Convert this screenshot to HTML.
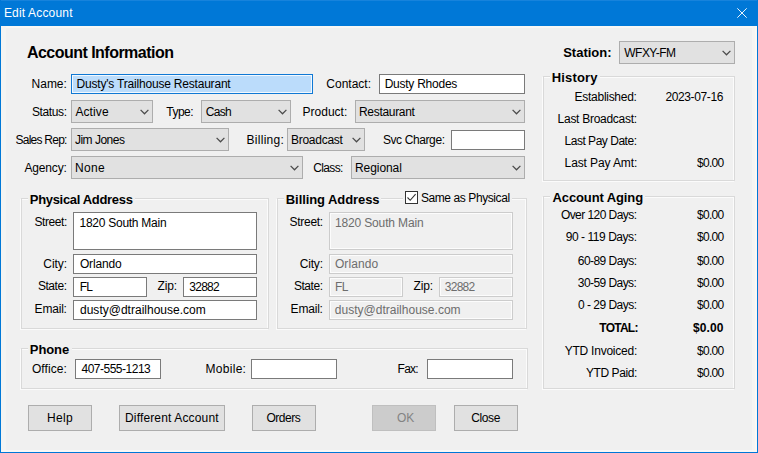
<!DOCTYPE html><html><head><meta charset="utf-8"><title>Edit Account</title><style>
html,body{margin:0;padding:0}
body{width:758px;height:453px;overflow:hidden;background:#f0f0f0;font-family:"Liberation Sans",sans-serif;font-size:12px;color:#000;position:relative}
.tb{position:absolute;left:0;top:0;width:758px;height:26px;background:#0078d7;box-shadow:inset 0 1px 0 #1783dc}
.bl,.br,.bb{position:absolute;background:#0078d7}
.bl{left:0;top:0;width:1px;height:453px}.br{right:0;top:0;width:1px;height:453px}.bb{left:0;bottom:0;width:758px;height:1px}
.t{position:absolute;white-space:nowrap;line-height:1}
.b{font-weight:bold}
.x{position:absolute;box-sizing:border-box}
.inp{background:#fff;border:1px solid #7a7a7a}
.sel{background:#bbdcfb;border-color:#0f78d4;box-shadow:inset 0 0 0 1px #f2f8fe}
.dis{background:#f0f0f0;border:1px solid #cccccc;box-shadow:inset 0 0 0 1px #fcfcfc}
.cmb{background:#e1e1e1;border:1px solid #adadad}
.btn{background:#e1e1e1;border:1px solid #adadad}
.off{background:#cccccc;border-color:#bfbfbf}
.gb{position:absolute;box-sizing:border-box;border:1px solid #d9d9d9;box-shadow:-1px 1px 0 #fbfbfb, inset -1px 1px 0 #fbfbfb}
.gap{position:absolute;background:#f0f0f0;height:3px}
.fr{position:absolute;background:#f7f7f5}
.chk{position:absolute;left:405px;top:191px;width:13px;height:13px;box-sizing:border-box;border:1px solid #333;background:#fff}
svg{position:absolute;overflow:visible}
</style></head><body>
<div class="fr" style="left:1px;top:26px;width:756px;height:2px"></div><div class="fr" style="left:1px;top:26px;width:5px;height:426px;background:#f4f4f2"></div><div class="fr" style="left:752px;top:26px;width:5px;height:426px;background:#f5f5f3"></div><div class="fr" style="left:1px;top:450px;width:756px;height:2px;background:#f8f8f6"></div><div class="fr" style="left:755px;top:26px;width:2px;height:426px;background:#fbf8f4"></div>
<div class="tb"></div><div class="bl"></div><div class="br"></div><div class="bb"></div>
<svg style="left:737px;top:8px" width="10" height="10" viewBox="0 0 10 10"><path d="M0.3 0.3L9.7 9.7M9.7 0.3L0.3 9.7" stroke="#fff" stroke-width="1" stroke-opacity="0.92" fill="none"/></svg>
<div class="gb" style="left:21px;top:198px;width:248px;height:131px"></div>
<div class="gap" style="left:28px;top:198px;width:107px"></div>
<div class="gb" style="left:277px;top:198px;width:250px;height:131px"></div>
<div class="gap" style="left:284px;top:198px;width:97px"></div>
<div class="gap" style="left:403px;top:198px;width:109px"></div>
<div class="gb" style="left:543px;top:76px;width:192px;height:105px"></div>
<div class="gap" style="left:550px;top:76px;width:50px"></div>
<div class="gb" style="left:543px;top:196px;width:192px;height:193px"></div>
<div class="gap" style="left:550px;top:196px;width:95px"></div>
<div class="gb" style="left:21px;top:348px;width:507px;height:41px"></div>
<div class="gap" style="left:28px;top:348px;width:44px"></div>
<div class="x inp sel" style="left:71px;top:74px;width:242px;height:20px"></div>
<div class="x inp" style="left:379px;top:74px;width:146px;height:20px"></div>
<div class="x inp" style="left:451px;top:130px;width:74px;height:20px"></div>
<div class="x cmb" style="left:71px;top:100px;width:82px;height:23px"></div>
<svg style="left:139.5px;top:108.7px" width="9" height="6" viewBox="0 0 9 6"><path d="M0.6 0.9L4.5 4.8L8.4 0.9" stroke="#4a4a4a" stroke-width="1.25" fill="none"/></svg>
<div class="x cmb" style="left:201px;top:100px;width:90px;height:23px"></div>
<svg style="left:277.5px;top:108.7px" width="9" height="6" viewBox="0 0 9 6"><path d="M0.6 0.9L4.5 4.8L8.4 0.9" stroke="#4a4a4a" stroke-width="1.25" fill="none"/></svg>
<div class="x cmb" style="left:355px;top:100px;width:170px;height:23px"></div>
<svg style="left:511.5px;top:108.7px" width="9" height="6" viewBox="0 0 9 6"><path d="M0.6 0.9L4.5 4.8L8.4 0.9" stroke="#4a4a4a" stroke-width="1.25" fill="none"/></svg>
<div class="x cmb" style="left:71px;top:128px;width:158px;height:23px"></div>
<svg style="left:215.5px;top:136.7px" width="9" height="6" viewBox="0 0 9 6"><path d="M0.6 0.9L4.5 4.8L8.4 0.9" stroke="#4a4a4a" stroke-width="1.25" fill="none"/></svg>
<div class="x cmb" style="left:287px;top:128px;width:78px;height:23px"></div>
<svg style="left:351.5px;top:136.7px" width="9" height="6" viewBox="0 0 9 6"><path d="M0.6 0.9L4.5 4.8L8.4 0.9" stroke="#4a4a4a" stroke-width="1.25" fill="none"/></svg>
<div class="x cmb" style="left:71px;top:156px;width:232px;height:23px"></div>
<svg style="left:289.5px;top:164.7px" width="9" height="6" viewBox="0 0 9 6"><path d="M0.6 0.9L4.5 4.8L8.4 0.9" stroke="#4a4a4a" stroke-width="1.25" fill="none"/></svg>
<div class="x cmb" style="left:351px;top:156px;width:174px;height:23px"></div>
<svg style="left:511.5px;top:164.7px" width="9" height="6" viewBox="0 0 9 6"><path d="M0.6 0.9L4.5 4.8L8.4 0.9" stroke="#4a4a4a" stroke-width="1.25" fill="none"/></svg>
<div class="x cmb" style="left:619px;top:41px;width:116px;height:23px"></div>
<svg style="left:721.5px;top:49.7px" width="9" height="6" viewBox="0 0 9 6"><path d="M0.6 0.9L4.5 4.8L8.4 0.9" stroke="#4a4a4a" stroke-width="1.25" fill="none"/></svg>
<div class="x inp" style="left:73px;top:212px;width:184px;height:38px"></div>
<div class="x inp" style="left:73px;top:254px;width:184px;height:20px"></div>
<div class="x inp" style="left:73px;top:277px;width:74px;height:20px"></div>
<div class="x inp" style="left:183px;top:277px;width:74px;height:20px"></div>
<div class="x inp" style="left:73px;top:300px;width:184px;height:20px"></div>
<div class="x dis" style="left:329px;top:212px;width:184px;height:38px"></div>
<div class="x dis" style="left:329px;top:254px;width:184px;height:20px"></div>
<div class="x dis" style="left:329px;top:277px;width:74px;height:20px"></div>
<div class="x dis" style="left:439px;top:277px;width:74px;height:20px"></div>
<div class="x dis" style="left:329px;top:300px;width:184px;height:20px"></div>
<div class="x inp" style="left:75px;top:359px;width:86px;height:20px"></div>
<div class="x inp" style="left:251px;top:359px;width:86px;height:20px"></div>
<div class="x inp" style="left:427px;top:359px;width:86px;height:20px"></div>
<div class="x btn" style="left:28px;top:405px;width:64px;height:26px"></div>
<div class="x btn" style="left:119px;top:405px;width:106px;height:26px"></div>
<div class="x btn" style="left:252px;top:405px;width:64px;height:26px"></div>
<div class="x btn off" style="left:372px;top:405px;width:64px;height:26px"></div>
<div class="x btn" style="left:454px;top:405px;width:64px;height:26px"></div>
<div class="chk"></div><svg style="left:406px;top:192px" width="11" height="11" viewBox="0 0 11 11"><path d="M1.5 5.5L4.2 8.3L9.6 2.2" stroke="#333" stroke-width="1.1" fill="none"/></svg>
<span class="t" id="t0" style="left:3.9px;top:7.0px;color:#fff;letter-spacing:0.17px;">Edit Account</span>
<span class="t b" id="t1" style="left:26.9px;top:44.5px;font-size:16px;letter-spacing:-0.52px;">Account Information</span>
<span class="t b" id="t2" style="left:563.2px;top:46.0px;font-size:13px;letter-spacing:-0.01px;">Station:</span>
<span class="t" id="t3" style="left:624.3px;top:46.5px;letter-spacing:-0.53px;">WFXY-FM</span>
<span class="t" id="t4" style="left:31.6px;top:78.0px;letter-spacing:-0.02px;">Name:</span>
<span class="t" id="t5" style="left:31.9px;top:105.5px;letter-spacing:-0.36px;">Status:</span>
<span class="t" id="t6" style="left:15.5px;top:133.5px;letter-spacing:-0.75px;">Sales Rep:</span>
<span class="t" id="t7" style="left:24.5px;top:161.5px;letter-spacing:-0.17px;">Agency:</span>
<span class="t" id="t8" style="left:166.3px;top:105.5px;letter-spacing:-0.54px;">Type:</span>
<span class="t" id="t9" style="left:246.6px;top:133.5px;letter-spacing:0.27px;">Billing:</span>
<span class="t" id="t10" style="left:326.3px;top:78.0px;letter-spacing:0.00px;">Contact:</span>
<span class="t" id="t11" style="left:302.5px;top:105.5px;letter-spacing:0.01px;">Product:</span>
<span class="t" id="t12" style="left:382.9px;top:133.5px;letter-spacing:-0.39px;">Svc Charge:</span>
<span class="t" id="t13" style="left:313.3px;top:161.5px;letter-spacing:-0.66px;">Class:</span>
<span class="t" id="t14" style="left:76.6px;top:78.0px;letter-spacing:-0.20px;">Dusty's Trailhouse Restaurant</span>
<span class="t" id="t15" style="left:384.7px;top:78.0px;letter-spacing:-0.25px;">Dusty Rhodes</span>
<span class="t" id="t16" style="left:75.4px;top:105.5px;letter-spacing:0.11px;">Active</span>
<span class="t" id="t17" style="left:205.8px;top:105.5px;letter-spacing:-0.75px;">Cash</span>
<span class="t" id="t18" style="left:359.0px;top:105.5px;letter-spacing:-0.31px;">Restaurant</span>
<span class="t" id="t19" style="left:74.9px;top:133.5px;letter-spacing:-0.49px;">Jim Jones</span>
<span class="t" id="t20" style="left:291.0px;top:133.5px;letter-spacing:-0.27px;">Broadcast</span>
<span class="t" id="t21" style="left:75.0px;top:161.5px;letter-spacing:0.34px;">None</span>
<span class="t" id="t22" style="left:355.0px;top:161.5px;letter-spacing:-0.07px;">Regional</span>
<span class="t b" id="t23" style="left:29.8px;top:193.0px;font-size:13px;letter-spacing:-0.32px;">Physical Address</span>
<span class="t b" id="t24" style="left:285.8px;top:193.0px;font-size:13px;letter-spacing:-0.08px;">Billing Address</span>
<span class="t" id="t25" style="left:420.9px;top:192.0px;letter-spacing:-0.41px;">Same as Physical</span>
<span class="t b" id="t26" style="left:551.8px;top:71.0px;font-size:13px;letter-spacing:0.16px;">History</span>
<span class="t b" id="t27" style="left:552.5px;top:191.0px;font-size:13px;letter-spacing:-0.11px;">Account Aging</span>
<span class="t b" id="t28" style="left:29.8px;top:343.0px;font-size:13px;letter-spacing:-0.08px;">Phone</span>
<span class="t" id="t29" style="left:34.5px;top:216.0px;letter-spacing:-0.43px;">Street:</span>
<span class="t" id="t30" style="left:43.3px;top:257.5px;letter-spacing:-0.06px;">City:</span>
<span class="t" id="t31" style="left:37.9px;top:280.0px;letter-spacing:-0.44px;">State:</span>
<span class="t" id="t32" style="left:34.6px;top:303.0px;letter-spacing:-0.20px;">Email:</span>
<span class="t" id="t33" style="left:79.5px;top:216.5px;letter-spacing:-0.26px;">1820 South Main</span>
<span class="t" id="t34" style="left:79.9px;top:258.0px;letter-spacing:-0.15px;">Orlando</span>
<span class="t" id="t35" style="left:79.7px;top:281.0px;letter-spacing:-0.75px;">FL</span>
<span class="t" id="t36" style="left:189.3px;top:281.0px;letter-spacing:-0.75px;">32882</span>
<span class="t" id="t37" style="left:80.0px;top:304.0px;letter-spacing:0.01px;">dusty@dtrailhouse.com</span>
<span class="t" id="t38" style="left:157.4px;top:280.0px;letter-spacing:-0.09px;">Zip:</span>
<span class="t" id="t39" style="left:289.5px;top:216.0px;letter-spacing:-0.28px;">Street:</span>
<span class="t" id="t40" style="left:299.7px;top:257.5px;letter-spacing:-0.18px;">City:</span>
<span class="t" id="t41" style="left:293.9px;top:280.0px;letter-spacing:-0.44px;">State:</span>
<span class="t" id="t42" style="left:290.6px;top:303.0px;letter-spacing:-0.20px;">Email:</span>
<span class="t" id="t43" style="left:334.9px;top:216.5px;color:#6d6d6d;letter-spacing:-0.14px;">1820 South Main</span>
<span class="t" id="t44" style="left:334.9px;top:258.0px;color:#6d6d6d;letter-spacing:0.10px;">Orlando</span>
<span class="t" id="t45" style="left:335.1px;top:281.0px;color:#6d6d6d;letter-spacing:-0.75px;">FL</span>
<span class="t" id="t46" style="left:444.7px;top:281.0px;color:#6d6d6d;letter-spacing:-0.70px;">32882</span>
<span class="t" id="t47" style="left:334.8px;top:304.0px;color:#6d6d6d;letter-spacing:0.01px;">dusty@dtrailhouse.com</span>
<span class="t" id="t48" style="left:413.4px;top:280.0px;letter-spacing:-0.09px;">Zip:</span>
<span class="t" id="t49" style="left:31.9px;top:362.5px;letter-spacing:0.10px;">Office:</span>
<span class="t" id="t50" style="left:81.5px;top:363.0px;letter-spacing:-0.50px;">407-555-1213</span>
<span class="t" id="t51" style="left:205.6px;top:362.5px;letter-spacing:0.28px;">Mobile:</span>
<span class="t" id="t52" style="left:397.6px;top:362.5px;letter-spacing:-0.75px;">Fax:</span>
<span class="t" id="t53" style="left:47.0px;top:411.5px;letter-spacing:0.34px;">Help</span>
<span class="t" id="t54" style="left:125.0px;top:411.5px;letter-spacing:0.15px;">Different Account</span>
<span class="t" id="t55" style="left:266.4px;top:411.5px;letter-spacing:-0.44px;">Orders</span>
<span class="t" id="t56" style="left:397.0px;top:411.5px;color:#838383;">OK</span>
<span class="t" id="t57" style="left:471.2px;top:411.5px;letter-spacing:-0.38px;">Close</span>
<span class="t" id="t58" style="left:574.6px;top:90.5px;letter-spacing:-0.28px;">Established:</span>
<span class="t" id="t59" style="left:665.4px;top:90.5px;letter-spacing:-0.38px;">2023-07-16</span>
<span class="t" id="t60" style="left:557.6px;top:112.5px;letter-spacing:-0.28px;">Last Broadcast:</span>
<span class="t" id="t61" style="left:564.5px;top:135.0px;letter-spacing:-0.48px;">Last Pay Date:</span>
<span class="t" id="t62" style="left:564.6px;top:157.0px;letter-spacing:-0.11px;">Last Pay Amt:</span>
<span class="t" id="t63" style="left:697.1px;top:157.0px;letter-spacing:-0.75px;">$0.00</span>
<span class="t" id="t64" style="left:560.9px;top:209.0px;letter-spacing:-0.56px;">Over 120 Days:</span>
<span class="t" id="t65" style="left:697.1px;top:209.0px;letter-spacing:-0.75px;">$0.00</span>
<span class="t" id="t66" style="left:565.8px;top:231.0px;letter-spacing:-0.46px;">90 - 119 Days:</span>
<span class="t" id="t67" style="left:697.1px;top:231.0px;letter-spacing:-0.75px;">$0.00</span>
<span class="t" id="t68" style="left:577.8px;top:255.0px;letter-spacing:-0.55px;">60-89 Days:</span>
<span class="t" id="t69" style="left:697.1px;top:255.0px;letter-spacing:-0.75px;">$0.00</span>
<span class="t" id="t70" style="left:577.8px;top:277.0px;letter-spacing:-0.56px;">30-59 Days:</span>
<span class="t" id="t71" style="left:697.1px;top:277.0px;letter-spacing:-0.75px;">$0.00</span>
<span class="t" id="t72" style="left:578.0px;top:299.0px;letter-spacing:-0.52px;">0 - 29 Days:</span>
<span class="t" id="t73" style="left:697.1px;top:299.0px;letter-spacing:-0.75px;">$0.00</span>
<span class="t b" id="t74" style="left:599.3px;top:321.5px;letter-spacing:-0.75px;">TOTAL:</span>
<span class="t b" id="t75" style="left:692.9px;top:321.5px;letter-spacing:0.14px;">$0.00</span>
<span class="t" id="t76" style="left:564.7px;top:344.5px;letter-spacing:-0.23px;">YTD Invoiced:</span>
<span class="t" id="t77" style="left:697.1px;top:344.5px;letter-spacing:-0.75px;">$0.00</span>
<span class="t" id="t78" style="left:585.9px;top:367.0px;letter-spacing:-0.40px;">YTD Paid:</span>
<span class="t" id="t79" style="left:697.1px;top:367.0px;letter-spacing:-0.75px;">$0.00</span>
</body></html>
